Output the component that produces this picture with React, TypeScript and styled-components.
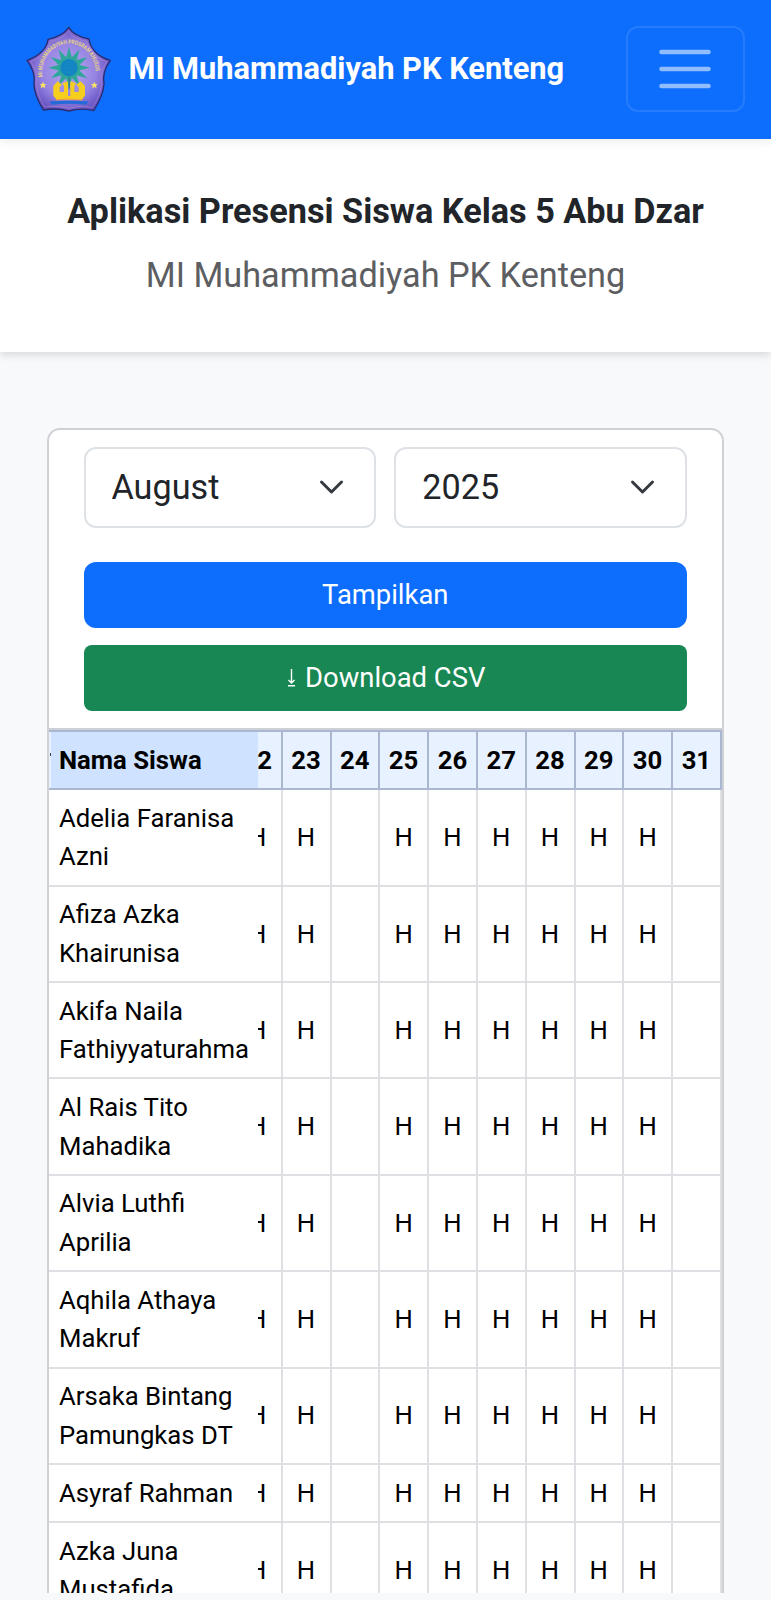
import React from 'react';
import styled, { createGlobalStyle } from 'styled-components';

const GlobalStyle = createGlobalStyle`
  * { box-sizing: border-box; }
  body {
    margin: 0;
    background: #f7f9fb;
    font-family: Roboto, "Liberation Sans", sans-serif;
    color: #212529;
  }
`;

const Page = styled.div`
  display: flex;
  flex-direction: column;
  width: 771px;
  height: 1600px;
  overflow: hidden;
  padding-bottom: 7px;
`;

const Navbar = styled.nav`
  flex: none;
  display: flex;
  align-items: center;
  height: 139px;
  padding: 0 26px 2px 24.5px;
  background: #0d6efd;
  position: relative;
  z-index: 2;
  box-shadow: 0 4px 8px rgba(0, 0, 0, 0.06);
`;

const Brand = styled.div`
  display: flex;
  align-items: center;
  flex: 1;
  gap: 16px;
`;

const BrandName = styled.span`
  color: #fff;
  font-size: 30.8px;
  font-weight: 700;
  white-space: nowrap;
`;

const Toggler = styled.button`
  display: flex;
  align-items: center;
  justify-content: center;
  width: 119px;
  height: 86px;
  padding: 0 1px 0 0;
  border: 2px solid rgba(255, 255, 255, 0.1);
  border-radius: 12px;
  background: transparent;
`;

const Hero = styled.header`
  flex: none;
  height: 213px;
  padding-top: 48px;
  background: #fff;
  text-align: center;
  white-space: nowrap;
  box-shadow: 0 3px 8px rgba(0, 0, 0, 0.13);
`;

const Title = styled.h1`
  margin: 0;
  font-size: 34.25px;
  line-height: 48px;
  font-weight: 700;
`;

const Subtitle = styled.p`
  margin: 16px 0 0;
  font-size: 34.25px;
  line-height: 48px;
  color: #5c5e61;
`;

const Card = styled.main`
  flex: 1;
  min-height: 0;
  margin: 76px 47px 0 47px;
  border: 2px solid #cfd1d4;
  border-bottom: 0;
  border-radius: 13px 13px 0 0;
  background: #fff;
  overflow: hidden;
`;

const Filters = styled.form`
  display: grid;
  grid-template-columns: 1fr 1fr;
  column-gap: 18px;
  height: 300px;
  align-content: start;
  padding: 17px 35px 0 34.5px;
  border-bottom: 2px solid #cdd0d6;
`;

const SelectBox = styled.div`
  display: flex;
  align-items: center;
  justify-content: space-between;
  height: 81px;
  margin-bottom: 34px;
  padding: 0 30px 2px 26px;
  border: 2px solid #dee2e6;
  border-radius: 12px;
  font-size: 34.2px;
`;

const Button = styled.button<{ $color: string; $radius: number }>`
  grid-column: 1 / -1;
  height: 66px;
  margin: 0 0 17px;
  padding: 0;
  border: 0;
  border-radius: ${(p) => p.$radius}px;
  background: ${(p) => p.$color};
  color: #fff;
  font-family: inherit;
  font-size: 27.4px;
  display: flex;
  align-items: center;
  justify-content: center;
  gap: 9px;
`;

const DownloadButton = styled(Button)`
  padding-left: 2px;
`;

const Row = styled.div<{ $lines: number }>`
  display: grid;
  grid-template-columns: 209px 24.8px repeat(8, 48.8px) 48.8px;
  height: ${(p) => (p.$lines === 2 ? 96.4 : 57.9)}px;
  color: #000;
  font-size: 25.7px;
  line-height: 38.5px;
  border-bottom: 2px solid #dee0e3;
`;

const HeadRow = styled(Row)`
  height: 60.2px;
  border-top: 2px solid #a9b7d1;
  border-bottom-color: #a9b7d1;
  background: #e7f1ff;
  font-weight: 700;
`;

const NameCell = styled.div`
  display: flex;
  align-items: center;
  padding-left: 10px;
  white-space: pre-line;
`;

const NameHead = styled(NameCell)`
  position: relative;
  margin-left: 2px;
  padding-left: 8px;
  background: #cfe2ff;

  &::before {
    content: '';
    position: absolute;
    left: -1px;
    top: 21px;
    width: 1px;
    height: 3px;
    background: #3c4048;
  }
`;

const DayCell = styled.div<{ $line: string }>`
  display: flex;
  align-items: center;
  justify-content: flex-end;
  overflow: hidden;
  border-right: 2px solid ${(p) => p.$line};
`;

const DayValue = styled.span`
  flex: none;
  width: 47.2px;
  text-align: center;
`;

const days = [22, 23, 24, 25, 26, 27, 28, 29, 30, 31];
const dayOff = [24, 31];

const students = [
  'Adelia Faranisa\nAzni',
  'Afiza Azka\nKhairunisa',
  'Akifa Naila\nFathiyyaturahma',
  'Al Rais Tito\nMahadika',
  'Alvia Luthfi\nAprilia',
  'Aqhila Athaya\nMakruf',
  'Arsaka Bintang\nPamungkas DT',
  'Asyraf Rahman',
  'Azka Juna\nMustafida',
];

const rays = Array.from({ length: 12 }, (_, i) => i * 30);

const Logo = () => (
  <svg width="88" height="88" viewBox="44 42 264 264">
    <defs>
      <radialGradient id="shield" cx="50%" cy="52%" r="55%">
        <stop offset="0" stopColor="#b9a8ee" />
        <stop offset="0.6" stopColor="#9583e2" />
        <stop offset="1" stopColor="#5a48bb" />
      </radialGradient>
      <path id="arc" d="M97 198 A80 86 0 1 1 255 198" />
    </defs>
    <path
      d="M175 49 C188 70 210 79 236 84 C240 112 262 138 300 148 C284 170 276 192 281 218 C280 246 268 270 250 299 C222 292 200 293 176 300 C152 293 128 292 99 297 C84 272 71 248 71 218 C75 190 67 170 50 148 C86 137 110 112 113 85 C140 79 162 70 175 49 Z"
      fill="url(#shield)"
      stroke="#2b2b72"
      strokeWidth="4"
      strokeLinejoin="round"
    />
    <path
      d="M175 60 C188 80 208 87 229 91 C236 121 260 143 289 152 C275 174 269 194 273 219 C272 244 262 264 246 290 C220 284 200 285 176 292 C152 285 128 284 103 288 C90 266 79 244 79 218 C82 192 76 172 61 152 C91 142 114 120 120 91 C144 86 162 79 175 60 Z"
      fill="none"
      stroke="#bd8fc9"
      strokeWidth="1.5"
    />
    <text fill="#e6d28a" fontSize="18" fontWeight="700" fontFamily="Roboto, sans-serif">
      <textPath href="#arc" textLength="270" lengthAdjust="spacingAndGlyphs">
        MI MUHAMMADIYAH PROGRAM KHUSUS
      </textPath>
    </text>
    <g fill="#2fa69b">
      {rays.map((a) => (
        <path key={a} d="M165 148 L176 107 L187 148 Z" transform={`rotate(${a} 176 170)`} />
      ))}
      <circle cx="176" cy="170" r="31" />
    </g>
    <circle cx="176" cy="170" r="26" fill="#1384c4" />
    <path d="M163 160 q12 -12 26 0 M161 171 h30 M164 181 q12 8 24 0" stroke="#1f8fbc" strokeWidth="2" fill="none" />
    <path
      d="M129 225 L142 211 L155 221 L148 228 V243 H161 V225 L156 217 L173 211 V255 H180 V211 L197 217 L192 225 V243 H205 V228 L198 221 L211 211 L224 225 V254 L214 266 H139 L129 254 Z"
      fill="#f6ce1d"
    />
    <path d="M176.500 196 V236" stroke="#2d7584" strokeWidth="3" />
    <path d="M136 267 Q176 261 217 267" stroke="#ef9f43" strokeWidth="3" fill="none" />
    <path d="M118 271 Q176 267 234 271 L228 281 Q176 275 124 281 Z" fill="#246ad9" />
    <g fill="#f4df68">
      <path d="M98 212 l3 7 7 0 -5 5 2 8 -7 -4 -7 4 2 -8 -5 -5 7 0 Z" />
      <path d="M252 212 l3 7 7 0 -5 5 2 8 -7 -4 -7 4 2 -8 -5 -5 7 0 Z" />
    </g>
  </svg>
);

const MenuIcon = () => (
  <svg width="58" height="58" viewBox="0 0 58 58" fill="none">
    <path
      d="M5.500 12H52.500M5.500 29H52.500M5.500 46H52.500"
      stroke="#fff"
      strokeOpacity="0.55"
      strokeWidth="4.6"
      strokeLinecap="round"
    />
  </svg>
);

const Chevron = () => (
  <svg width="25" height="16" viewBox="0 0 25 16" fill="none">
    <path d="M2.500 3L12.500 13L22.500 3" stroke="#343a40" strokeWidth="3" strokeLinecap="round" strokeLinejoin="round" />
  </svg>
);

const DownloadIcon = () => (
  <svg width="9" height="18" viewBox="0 0 9 18" fill="none" stroke="#fff" strokeWidth="1.4">
    <path d="M4.500 0V14M1.500 11L4.500 14L7.500 11M1 16.800H8" />
  </svg>
);

export default function App() {
  return (
    <Page>
      <GlobalStyle />
      <Navbar>
        <Brand>
          <Logo />
          <BrandName>MI Muhammadiyah PK Kenteng</BrandName>
        </Brand>
        <Toggler type="button" aria-label="Menu">
          <MenuIcon />
        </Toggler>
      </Navbar>
      <Hero>
        <Title>Aplikasi Presensi Siswa Kelas 5 Abu Dzar</Title>
        <Subtitle>MI Muhammadiyah PK Kenteng</Subtitle>
      </Hero>
      <Card>
        <Filters>
          <SelectBox>
            August
            <Chevron />
          </SelectBox>
          <SelectBox>
            2025
            <Chevron />
          </SelectBox>
          <Button type="button" $color="#0d6efd" $radius={12}>
            Tampilkan
          </Button>
          <DownloadButton type="button" $color="#198754" $radius={8}>
            <DownloadIcon />
            Download CSV
          </DownloadButton>
        </Filters>
        <HeadRow $lines={1}>
          <NameHead>Nama Siswa</NameHead>
          {days.map((d) => (
            <DayCell key={d} $line="#a9b7d1">
              <DayValue>{d}</DayValue>
            </DayCell>
          ))}
        </HeadRow>
        {students.map((name) => (
          <Row key={name} $lines={name.split('\n').length}>
            <NameCell>{name}</NameCell>
            {days.map((d) => (
              <DayCell key={d} $line="#dee0e3">
                <DayValue>{dayOff.includes(d) ? '' : 'H'}</DayValue>
              </DayCell>
            ))}
          </Row>
        ))}
      </Card>
    </Page>
  );
}
